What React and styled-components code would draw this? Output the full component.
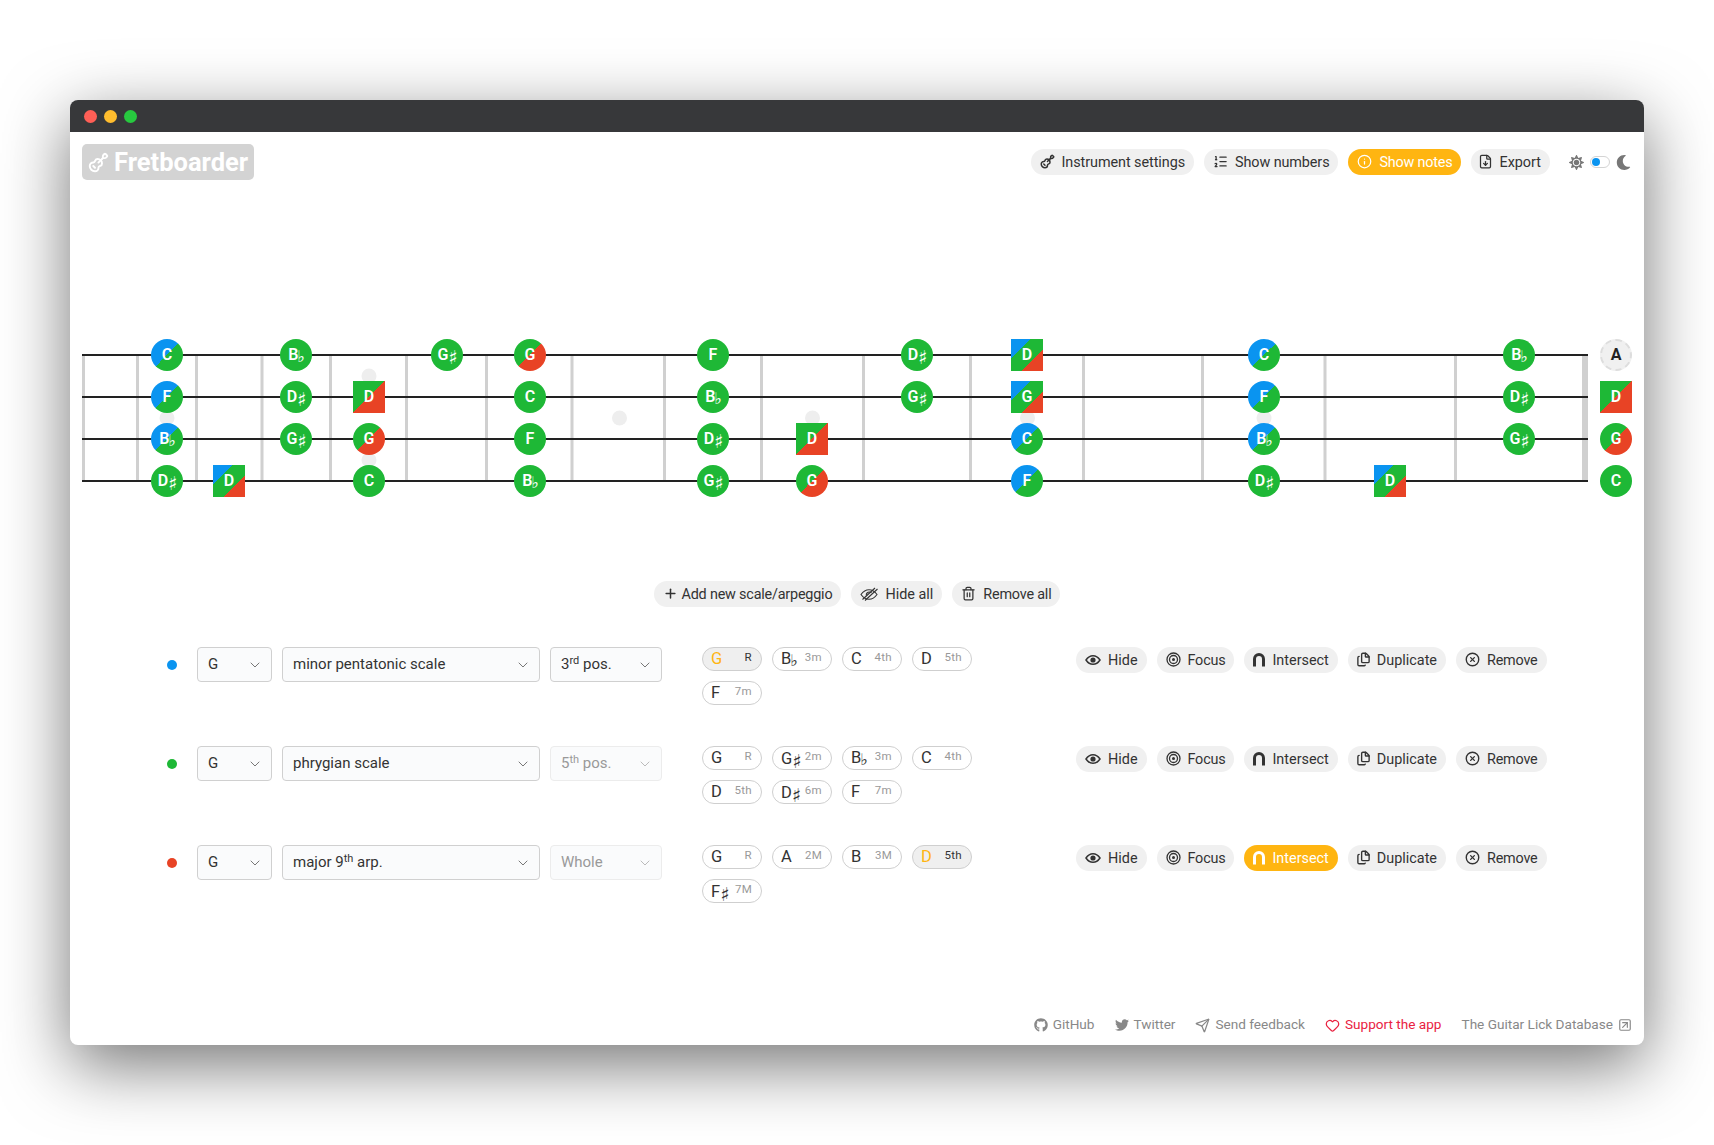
import React from "react";
import styled, { createGlobalStyle, css } from "styled-components";
import { Guitar, ListOrdered, Info, FileDown, Plus, Trash2, ChevronDown, CircleX, Send, Heart, SquareArrowUpRight, Files } from "lucide-react";
import { FaSun, FaMoon, FaGithub, FaTwitter } from "react-icons/fa";

const FONT = `Roboto, "Liberation Sans", sans-serif`;
const GREEN = "#1eb836", BLUE = "#0a94f0", RED = "#e84325", ORANGE = "#ffb511";

const Global = createGlobalStyle`
  html, body { margin: 0; padding: 0; background: #fff; }
  body { font-family: ${FONT}; color: #333; overflow: hidden; }
  * { box-sizing: border-box; }
`;

const Page = styled.div`
  width: 1714px; height: 1145px; padding: 100px 70px; overflow: hidden; background: #fff;
`;
const Win = styled.div`
  height: 945px; background: #fff; border-radius: 8px; overflow: hidden;
  display: flex; flex-direction: column;
  box-shadow: 0 20px 68px rgba(0,0,0,.55);
`;
const TitleBar = styled.div`
  height: 32px; flex: none; background: #37383a; display: flex; align-items: center; gap: 7px; padding: 0 0 0 13.5px;
`;
const Light = styled.span`
  width: 13px; height: 13px; border-radius: 50%; background: ${p => p.$c};
`;
const Content = styled.div`
  flex: 1; display: flex; flex-direction: column; padding-top: 12px; min-height: 0;
`;
const Header = styled.header`
  display: flex; align-items: center; justify-content: space-between; padding: 0 13px 0 12px; height: 36px; flex: none;
`;
const Logo = styled.div`
  width: 172px; height: 36px; background: #d3d3d3; border-radius: 5px; color: #fff;
  display: flex; align-items: center; gap: 5px; padding-left: 6px;
  font: 700 25.5px/1 ${FONT};
`;
const LogoText = styled.span`
  padding-top: 2px;
`;
const HeaderRight = styled.div`
  display: flex; align-items: center; gap: 10px;
`;
const Pill = styled.button`
  height: 26px; border: 0; border-radius: 13px; padding: 0 9px; margin: 0;
  display: inline-flex; align-items: center; gap: 7px;
  font: 400 14.4px/1 ${FONT}; white-space: nowrap;
  background: ${p => (p.$on ? ORANGE : "#f0f0f0")};
  color: ${p => (p.$on ? "#fff" : "#333")};
  svg { flex: none; margin-top: -1px; }
`;
const PillLabel = styled.span`
  padding-top: 2px; letter-spacing: ${p => p.$ls || 0}px;
`;
const FileIcon = styled(FileDown)`
  margin-left: -2px; margin-right: -1px;
`;
const CopyIcon = styled(Files)`
  margin-left: -1px; margin-right: -1px;
`;
const PlusIcon = styled(Plus)`
  margin-right: -3px;
`;
const ThemeSwitch = styled.div`
  display: flex; align-items: center; gap: 6px; margin-left: 9px; color: #777;
`;
const Track = styled.span`
  width: 20px; height: 12px; border-radius: 6px; background: #fff; border: 1px solid #d4d4d4; display: flex; align-items: center; padding-left: 1px;
  &::before { content: ""; width: 8px; height: 8px; border-radius: 50%; background: ${BLUE}; }
`;
const Board = styled.section`
  position: relative; height: 158px; margin-top: 159px; flex: none;
`;
const BoardArt = styled.svg`
  position: absolute; left: 0; top: 0; display: block;
`;
const noteBg = (kind) => {
  if (kind === "bg") return `linear-gradient(135deg, ${BLUE} 50%, ${GREEN} 50%)`;
  if (kind === "gr") return `linear-gradient(135deg, ${GREEN} 50%, ${RED} 50%)`;
  if (kind === "bgr") return `linear-gradient(135deg, ${BLUE} 31%, ${GREEN} 31%, ${GREEN} 67%, ${RED} 67%)`;
  return GREEN;
};
const Note = styled.div`
  position: absolute; width: 32px; height: 32px; left: ${p => p.$x - 70 - 16}px; top: ${p => p.$y - 16}px;
  display: flex; align-items: center; justify-content: center;
  font: 600 16px/1 ${FONT}; color: #fff;
  border-radius: ${p => (p.$square ? "0" : "50%")};
  background: ${p => noteBg(p.$kind)};
  ${p => p.$open && css`
    background: #f0f0f0; color: #222; font-weight: 700; border: 2px dashed #ddd;
  `}
`;
const accidental = css`
  font-family: "DejaVu Sans", sans-serif; line-height: 1;
  font-size: ${p => (p.$flat ? 16 : 19)}px;
  margin-top: ${p => (p.$flat ? 3 : 5)}px;
  margin-left: ${p => (p.$flat ? -1 : 0)}px;
  margin-right: -1px;
`;
const Acc = styled.span`
  ${accidental}; font-weight: 700;
`;
const CenterBar = styled.div`
  display: flex; justify-content: center; gap: 10px; margin-top: 84px; flex: none;
`;
const Rows = styled.div`
  margin-top: 40px; flex: none;
`;
const Row = styled.div`
  height: 99px; display: flex; align-items: flex-start; padding-left: 97px;
`;
const Selects = styled.div`
  display: flex; align-items: center; gap: 10px; height: 35px; width: 495px; flex: none;
`;
const Dot = styled.span`
  width: 10px; height: 10px; border-radius: 50%; margin-right: 10px; flex: none; background: ${p => p.$c};
`;
const Select = styled.div`
  width: ${p => p.$w}px; height: 35px; flex: none; border-radius: 4px; background: #fafbfc;
  border: 1px solid ${p => (p.$off ? "#ececec" : "#d0d0d0")};
  color: ${p => (p.$off ? "#999" : "#333")};
  display: flex; align-items: center; justify-content: space-between; padding: 0 8px 0 10px;
  font: 400 15px/1 ${FONT};
  sup { font-size: 11px; line-height: 0; vertical-align: 5px; }
  svg { color: ${p => (p.$off ? "#bbb" : "#777")}; flex: none; }
`;
const Chips = styled.div`
  width: 270px; margin-left: 40px; display: flex; flex-wrap: wrap; gap: 10px; flex: none;
`;
const Chip = styled.div`
  width: 60px; height: 24px; border-radius: 12px; border: 1px solid #cfcfcf;
  background: ${p => (p.$on ? "#efefef" : "#fff")};
  display: flex; align-items: flex-start; justify-content: space-between; padding: 0 9px 0 8px;
`;
const ChipNote = styled.span`
  font: 400 16.5px/22px ${FONT}; color: ${p => (p.$on ? ORANGE : "#333")}; display: flex; align-items: center;
`;
const ChipAcc = styled.span`
  ${accidental}; font-weight: 400;
`;
const Interval = styled.span`
  font: 400 11.5px/18px ${FONT}; color: ${p => (p.$on ? "#333" : "#999")}; letter-spacing: .3px;
`;
const RowActions = styled.div`
  display: flex; gap: 10px; margin-left: 104px; flex: none;
`;
const Footer = styled.footer`
  margin-top: auto; height: 40px; flex: none; padding: 0 12px 0 0; display: flex; justify-content: flex-end; align-items: center; gap: 20px;
  font: 400 13.6px/1 ${FONT}; color: #888;
`;
const FootLink = styled.a`
  display: inline-flex; align-items: center; gap: 5px; color: ${p => (p.$red ? "#e9213f" : "#888")};
`;

const EyeIcon = () => (
  <svg width="16" height="16" viewBox="0 0 16 16" fill="none" stroke="currentColor" strokeWidth="1.5">
    <path d="M1 8c2-3 4.300-4.300 7-4.300S13 5 15 8c-2 3-4.300 4.300-7 4.300S3 11 1 8z" />
    <circle cx="8" cy="8" r="2.600" fill="currentColor" stroke="none" />
  </svg>
);
const EyeOffIcon = () => (
  <svg width="18" height="14" viewBox="0 0 18 14" fill="none" stroke="currentColor" strokeWidth="1.100">
    <path d="M1 7.500C3.500 4 6 2.700 9 2.700s5.500 1.300 8 4.800c-2.500 3.500-5 4.800-8 4.800S3.500 11 1 7.500z" />
    <path d="M6.300 8.500C6 6.500 7.500 5 9.500 5c.8 0 1.500.3 2 .8" />
    <path d="M2.500 12.500 15 1M5 13.500 17.500 2" />
  </svg>
);
const FocusIcon = () => (
  <svg width="15" height="15" viewBox="0 0 15 15" fill="none" stroke="currentColor" strokeWidth="1.300">
    <circle cx="7.500" cy="7.500" r="6.500" />
    <circle cx="7.500" cy="7.500" r="4" />
    <circle cx="7.500" cy="7.500" r="1.500" fill="currentColor" stroke="none" />
  </svg>
);
const ArchIcon = () => (
  <svg width="12" height="14" viewBox="0 0 12 14" fill="currentColor">
    <path d="M0 13.500V6a6 6 0 0 1 12 0v7.500H9V6a3 3 0 0 0-6 0v7.500H0z" />
  </svg>
);

const acc = (name) => {
  const m = name.match(/^([A-G])([#b]?)$/);
  return [m[1], m[2] === "#" ? "♯" : m[2] === "b" ? "♭" : ""];
};

const S = [16, 58, 100, 142];
const NOTES = [
  [167, 0, "C", "bg"], [296, 0, "Bb"], [447, 0, "G#"], [530, 0, "G", "gr"], [713, 0, "F"], [917, 0, "D#"], [1027, 0, "D", "bgr", 1], [1264, 0, "C", "bg"], [1519, 0, "Bb"],
  [167, 1, "F", "bg"], [296, 1, "D#"], [369, 1, "D", "gr", 1], [530, 1, "C"], [713, 1, "Bb"], [917, 1, "G#"], [1027, 1, "G", "bgr", 1], [1264, 1, "F", "bg"], [1519, 1, "D#"], [1616, 1, "D", "gr", 1],
  [167, 2, "Bb", "bg"], [296, 2, "G#"], [369, 2, "G", "gr"], [530, 2, "F"], [713, 2, "D#"], [812, 2, "D", "gr", 1], [1027, 2, "C", "bg"], [1264, 2, "Bb", "bg"], [1519, 2, "G#"], [1616, 2, "G", "gr"],
  [167, 3, "D#"], [229, 3, "D", "bgr", 1], [369, 3, "C"], [530, 3, "Bb"], [713, 3, "G#"], [812, 3, "G", "gr"], [1027, 3, "F", "bg"], [1264, 3, "D#"], [1390, 3, "D", "bgr", 1], [1616, 3, "C"],
];
const FRETS = [83.5, 137.5, 196.5, 262, 330.5, 406.5, 486.5, 572, 664.5, 761.5, 863.5, 970.5, 1083.5, 1202.5, 1325, 1455.5];
const INLAYS = [[167, 418], [369, 376], [369, 460], [619.5, 418], [812.5, 418], [1027.5, 418], [1264, 418]];

const ROWS = [
  { c: BLUE, key: "G", scale: <>minor pentatonic scale</>, pos: <>3<sup>rd</sup> pos.</>, off: false,
    chips: [["G", "R", 1], ["Bb", "3m"], ["C", "4th"], ["D", "5th"], ["F", "7m"]] },
  { c: GREEN, key: "G", scale: <>phrygian scale</>, pos: <>5<sup>th</sup> pos.</>, off: true,
    chips: [["G", "R"], ["G#", "2m"], ["Bb", "3m"], ["C", "4th"], ["D", "5th"], ["D#", "6m"], ["F", "7m"]] },
  { c: RED, key: "G", scale: <>major 9<sup>th</sup> arp.</>, pos: <>Whole</>, off: true, inter: true,
    chips: [["G", "R"], ["A", "2M"], ["B", "3M"], ["D", "5th", 1], ["F#", "7M"]] },
];

export default function App() {
  return (
    <Page>
      <Global />
      <Win>
        <TitleBar>
          <Light $c="#ff5f56" /><Light $c="#ffbd2e" /><Light $c="#27c93f" />
        </TitleBar>
        <Content>
          <Header>
            <Logo><Guitar size={21} strokeWidth={2.2} /><LogoText>Fretboarder</LogoText></Logo>
            <HeaderRight>
              <Pill><Guitar size={15} strokeWidth={2.4} /><PillLabel $ls={-0.06}>Instrument settings</PillLabel></Pill>
              <Pill><ListOrdered size={15} /><PillLabel $ls={-0.1}>Show numbers</PillLabel></Pill>
              <Pill $on><Info size={15} /><PillLabel $ls={-0.2}>Show notes</PillLabel></Pill>
              <Pill><FileIcon size={15} /><PillLabel>Export</PillLabel></Pill>
              <ThemeSwitch><FaSun size={15} /><Track /><FaMoon size={15} /></ThemeSwitch>
            </HeaderRight>
          </Header>
          <Board>
            <BoardArt width="1574" height="158" viewBox="0 0 1574 158">
              {INLAYS.map(([x, y]) => <circle key={`${x}-${y}`} cx={x - 70} cy={y - 339} r="7.500" fill="#eee" />)}
              {FRETS.map(x => <rect key={x} x={x - 70 - 1.5} y="16" width="3" height="126" fill="#d0d0d0" />)}
              <rect x="1512" y="16" width="6" height="126" fill="#d0d0d0" />
              {S.map(y => <rect key={y} x="12" y={y - 1} width="1506" height="2" fill="#222" />)}
            </BoardArt>
            {NOTES.map(([x, s, name, kind, sq]) => {
              const [l, a] = acc(name);
              return (
                <Note key={`${x}-${s}`} $x={x} $y={S[s]} $kind={kind} $square={!!sq}>
                  {l}{a && <Acc $flat={a === "♭"}>{a}</Acc>}
                </Note>
              );
            })}
            <Note $x={1616} $y={S[0]} $open>A</Note>
          </Board>
          <CenterBar>
            <Pill><PlusIcon size={15} strokeWidth={2.4} /><PillLabel $ls={-0.2}>Add new scale/arpeggio</PillLabel></Pill>
            <Pill><EyeOffIcon /><PillLabel>Hide all</PillLabel></Pill>
            <Pill><Trash2 size={15} /><PillLabel $ls={-0.2}>Remove all</PillLabel></Pill>
          </CenterBar>
          <Rows>
            {ROWS.map((r, i) => (
              <Row key={i}>
                <Selects>
                  <Dot $c={r.c} />
                  <Select $w={75}><span>{r.key}</span><ChevronDown size={16} strokeWidth={1.5} /></Select>
                  <Select $w={258}><span>{r.scale}</span><ChevronDown size={16} strokeWidth={1.5} /></Select>
                  <Select $w={112} $off={r.off}><span>{r.pos}</span><ChevronDown size={16} strokeWidth={1.5} /></Select>
                </Selects>
                <Chips>
                  {r.chips.map(([n, iv, on]) => {
                    const [l, a] = acc(n);
                    return (
                      <Chip key={n} $on={!!on}>
                        <ChipNote $on={!!on}>{l}{a && <ChipAcc $flat={a === "♭"}>{a}</ChipAcc>}</ChipNote>
                        <Interval $on={!!on}>{iv}</Interval>
                      </Chip>
                    );
                  })}
                </Chips>
                <RowActions>
                  <Pill><EyeIcon /><PillLabel>Hide</PillLabel></Pill>
                  <Pill><FocusIcon /><PillLabel $ls={-0.2}>Focus</PillLabel></Pill>
                  <Pill $on={r.inter}><ArchIcon /><PillLabel>Intersect</PillLabel></Pill>
                  <Pill><CopyIcon size={15} strokeWidth={2.2} /><PillLabel>Duplicate</PillLabel></Pill>
                  <Pill><CircleX size={15} strokeWidth={2.2} /><PillLabel $ls={-0.2}>Remove</PillLabel></Pill>
                </RowActions>
              </Row>
            ))}
          </Rows>
          <Footer>
            <FootLink><FaGithub size={14} />GitHub</FootLink>
            <FootLink><FaTwitter size={14} />Twitter</FootLink>
            <FootLink><Send size={15} />Send feedback</FootLink>
            <FootLink $red><Heart size={15} />Support the app</FootLink>
            <FootLink>The Guitar Lick Database<SquareArrowUpRight size={14} /></FootLink>
          </Footer>
        </Content>
      </Win>
    </Page>
  );
}
